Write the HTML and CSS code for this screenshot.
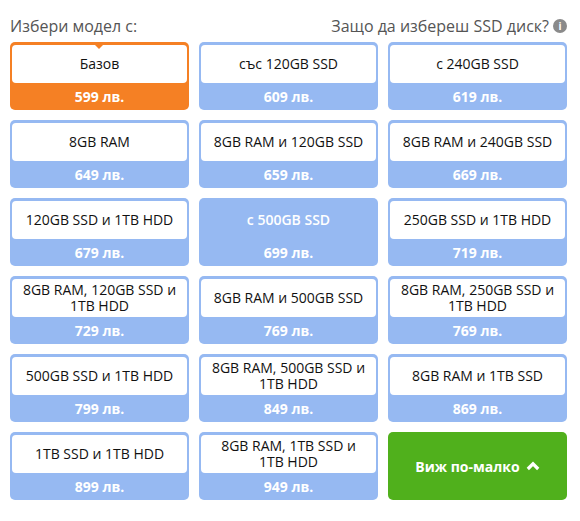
FILE: index.html
```html
<!DOCTYPE html>
<html lang="bg">
<head>
    <meta charset="UTF-8">
    <title>Избери модел</title>
    <link rel="stylesheet" href="styles.css">
</head>
<body>
    <div class="picker">
        <div class="picker-head">
            <span class="picker-title">Избери модел с:</span>
            <a class="picker-help" href="#">Защо да избереш SSD диск? <span class="info">i</span></a>
        </div>

        <ul class="models">
            <li class="model active"><div class="label">Базов</div><div class="price">599 лв.</div></li>
            <li class="model"><div class="label">със 120GB SSD</div><div class="price">609 лв.</div></li>
            <li class="model"><div class="label">с 240GB SSD</div><div class="price">619 лв.</div></li>

            <li class="model"><div class="label">8GB RAM</div><div class="price">649 лв.</div></li>
            <li class="model"><div class="label">8GB RAM и 120GB SSD</div><div class="price">659 лв.</div></li>
            <li class="model"><div class="label">8GB RAM и 240GB SSD</div><div class="price">669 лв.</div></li>

            <li class="model"><div class="label">120GB SSD и 1TB HDD</div><div class="price">679 лв.</div></li>
            <li class="model disabled"><div class="label">с 500GB SSD</div><div class="price">699 лв.</div></li>
            <li class="model"><div class="label">250GB SSD и 1TB HDD</div><div class="price">719 лв.</div></li>

            <li class="model"><div class="label">8GB RAM, 120GB SSD и 1TB HDD</div><div class="price">729 лв.</div></li>
            <li class="model"><div class="label">8GB RAM и 500GB SSD</div><div class="price">769 лв.</div></li>
            <li class="model"><div class="label">8GB RAM, 250GB SSD и 1TB HDD</div><div class="price">769 лв.</div></li>

            <li class="model"><div class="label">500GB SSD и 1TB HDD</div><div class="price">799 лв.</div></li>
            <li class="model"><div class="label">8GB RAM, 500GB SSD и 1TB HDD</div><div class="price">849 лв.</div></li>
            <li class="model"><div class="label">8GB RAM и 1TB SSD</div><div class="price">869 лв.</div></li>

            <li class="model"><div class="label">1TB SSD и 1TB HDD</div><div class="price">899 лв.</div></li>
            <li class="model"><div class="label">8GB RAM, 1TB SSD и 1TB HDD</div><div class="price">949 лв.</div></li>
            <li class="less">
                Виж по-малко
                <svg width="14" height="10" viewBox="0 0 14 10"><path d="M1.8 8 L7 2.8 L12.2 8" fill="none" stroke="#fff" stroke-width="3.2"/></svg>
            </li>
        </ul>
    </div>
</body>
</html>
```

FILE: styles.css
```css
* {
    margin: 0;
    padding: 0;
    box-sizing: border-box;
}
body {
    font-family: "Open Sans", "Liberation Sans", sans-serif;
    background: #fff;
}
ul {
    list-style: none;
}
.picker {
    width: 567px;
    padding: 14px 0 0 10px;
}
.picker-head {
    display: flex;
    justify-content: space-between;
    align-items: center;
    height: 24px;
    margin-bottom: 4px;
    font-size: 16px;
    color: #555;
}
.picker-help {
    color: #555;
    text-decoration: none;
    display: flex;
    align-items: center;
    gap: 4px;
}
.info {
    display: inline-block;
    width: 14px;
    height: 14px;
    border-radius: 50%;
    background: #8a8a8a;
    color: #fff;
    font-size: 10px;
    font-weight: bold;
    line-height: 14px;
    text-align: center;
}
.models {
    display: grid;
    grid-template-columns: repeat(3, 179px);
    grid-auto-rows: 68px;
    gap: 10px;
}
.model {
    position: relative;
    display: flex;
    flex-direction: column;
    padding: 3px 2px 0;
    border-radius: 5px;
    background: #96b9f2;
}
.model .label {
    height: 38px;
    display: flex;
    align-items: center;
    justify-content: center;
    padding: 0 6px;
    background: #fff;
    border-radius: 4px;
    font-size: 14px;
    line-height: 16px;
    color: #111;
    text-align: center;
}
.model .price {
    flex: 1;
    display: flex;
    align-items: center;
    justify-content: center;
    font-size: 14px;
    font-weight: bold;
    color: #fff;
}
.model.active {
    background: #f58024;
}
.model.active::after {
    content: "";
    position: absolute;
    left: 85px;
    top: 3px;
    border-left: 4px solid transparent;
    border-right: 4px solid transparent;
    border-top: 4px solid #f58024;
}
.model.disabled .label {
    background: transparent;
    color: #fff;
    font-weight: 600;
}
.less {
    display: flex;
    align-items: center;
    justify-content: center;
    gap: 6px;
    background: #50b01c;
    border-radius: 5px;
    color: #fff;
    font-size: 14px;
    font-weight: bold;
}
```
